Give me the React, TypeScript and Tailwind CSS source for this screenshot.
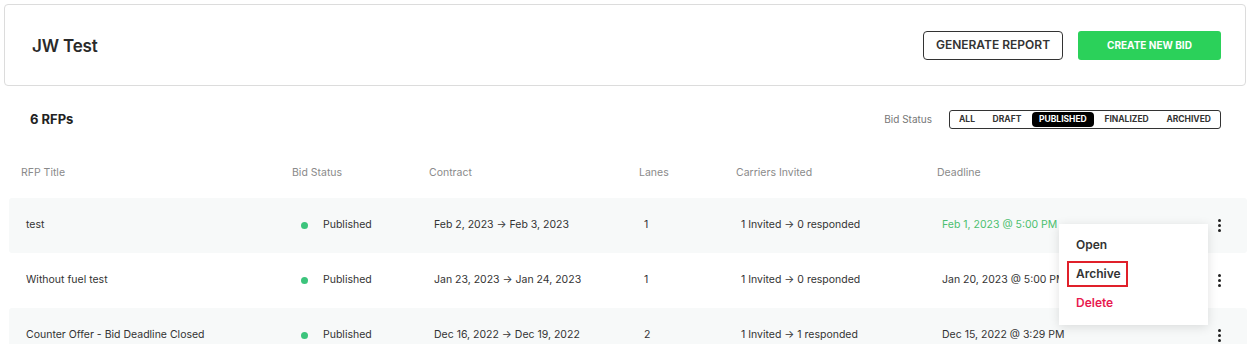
import { useState } from "react";

const rows = [
  {
    title: "test",
    status: "Published",
    contract: "Feb 2, 2023 → Feb 3, 2023",
    lanes: "1",
    carriers: "1 Invited → 0 responded",
    deadline: "Feb 1, 2023 @ 5:00 PM",
    upcoming: true,
  },
  {
    title: "Without fuel test",
    status: "Published",
    contract: "Jan 23, 2023 → Jan 24, 2023",
    lanes: "1",
    carriers: "1 Invited → 0 responded",
    deadline: "Jan 20, 2023 @ 5:00 PM",
  },
  {
    title: "Counter Offer - Bid Deadline Closed",
    status: "Published",
    contract: "Dec 16, 2022 → Dec 19, 2022",
    lanes: "2",
    carriers: "1 Invited → 1 responded",
    deadline: "Dec 15, 2022 @ 3:29 PM",
  },
];

const filters = ["ALL", "DRAFT", "PUBLISHED", "FINALIZED", "ARCHIVED"];

const cols = "grid grid-cols-[271px_137px_210px_97px_201px_1fr] items-center";

function Kebab() {
  return (
    <span className="flex flex-col items-center gap-[2px]">
      <span className="h-[3px] w-[3px] rounded-full bg-[#222]" />
      <span className="h-[3px] w-[3px] rounded-full bg-[#222]" />
      <span className="h-[3px] w-[3px] rounded-full bg-[#222]" />
    </span>
  );
}

export default function App() {
  const [active, setActive] = useState("PUBLISHED");

  return (
    <div className="relative h-[351px] w-[1256px] overflow-hidden bg-white pl-[4px] pr-[9px] pt-[4px] font-['Inter',sans-serif] text-[#333]">
      {/* Top card */}
      <header className="mr-[1px] flex h-[82px] items-center justify-between rounded-[4px] border border-[#dcdcdc] pl-[27px] pr-[24px]">
        <h1 className="pt-[3px] text-[17px] font-semibold tracking-[-0.01em] text-[#2a2a2a]">JW Test</h1>
        <div className="flex items-center gap-[15px]">
          <button className="h-[29px] w-[140px] rounded-[4px] border border-[#333] text-[12px] font-semibold text-[#333]">
            GENERATE REPORT
          </button>
          <button className="h-[29px] w-[143px] rounded-[3px] bg-[#2bd15a] text-[10px] font-bold text-white">
            CREATE NEW BID
          </button>
        </div>
      </header>

      {/* Toolbar */}
      <div className="mt-[24px] flex h-[19px] items-center justify-between pl-[26px] pr-[26px]">
        <span className="text-[13px] font-bold text-[#222]">6 RFPs</span>
        <div className="flex items-center gap-[17px]">
          <span className="text-[10px] text-[#777]">Bid Status</span>
          <div className="flex h-[19px] w-[272px] items-center justify-between rounded-[3px] border border-[#333] px-[2px]">
            {filters.map((f) => (
              <button
                key={f}
                onClick={() => setActive(f)}
                className={`h-[15px] rounded-[4px] px-[7px] text-[8.5px] font-bold leading-[15px] ${
                  active === f ? "bg-black text-white" : "text-[#333]"
                }`}
              >
                {f}
              </button>
            ))}
          </div>
        </div>
      </div>

      {/* Table header */}
      <div className={`${cols} mt-[36px] px-[17px] text-[10.5px] text-[#8a8a8a]`}>
        <span>RFP Title</span>
        <span>Bid Status</span>
        <span>Contract</span>
        <span>Lanes</span>
        <span>Carriers Invited</span>
        <span>Deadline</span>
      </div>

      {/* Rows (scroll area) */}
      <div className="mt-[17px] h-[146px] overflow-hidden pl-[5px]">
        {rows.map((r, i) => (
          <div
            key={r.title}
            className={`${cols} relative h-[55px] rounded-[3px] pl-[17px] pr-[26px] text-[10.5px] text-[#333] ${
              i % 2 === 0 ? "bg-[#f7f9f9]" : "bg-white"
            }`}
          >
            <span>{r.title}</span>
            <span className="flex items-center gap-[15px] pl-[4px]">
              <span className="h-[7px] w-[7px] rounded-full bg-[#3cc47c]" />
              {r.status}
            </span>
            <span>{r.contract}</span>
            <span>{r.lanes}</span>
            <span>{r.carriers}</span>
            <span className="flex items-center justify-between">
              <span className={r.upcoming ? "text-[#4cbf6f]" : ""}>{r.deadline}</span>
              <Kebab />
            </span>
          </div>
        ))}
      </div>

      {/* Row action menu */}
      <div className="absolute left-[1059px] top-[224px] flex h-[101px] w-[149px] flex-col gap-[3px] bg-white px-[8px] pt-[8px] shadow-[0_2px_10px_rgba(0,0,0,0.12)]">
        <span className="flex h-[26px] items-center px-[9px] text-[12px] font-semibold text-[#333]">Open</span>
        <span className="flex h-[26px] w-[61px] items-center border-2 border-[#e0202a] px-[7px] text-[12px] font-semibold text-[#333]">Archive</span>
        <span className="flex h-[26px] items-center px-[9px] text-[12px] font-semibold text-[#e8194f]">Delete</span>
      </div>
    </div>
  );
}
